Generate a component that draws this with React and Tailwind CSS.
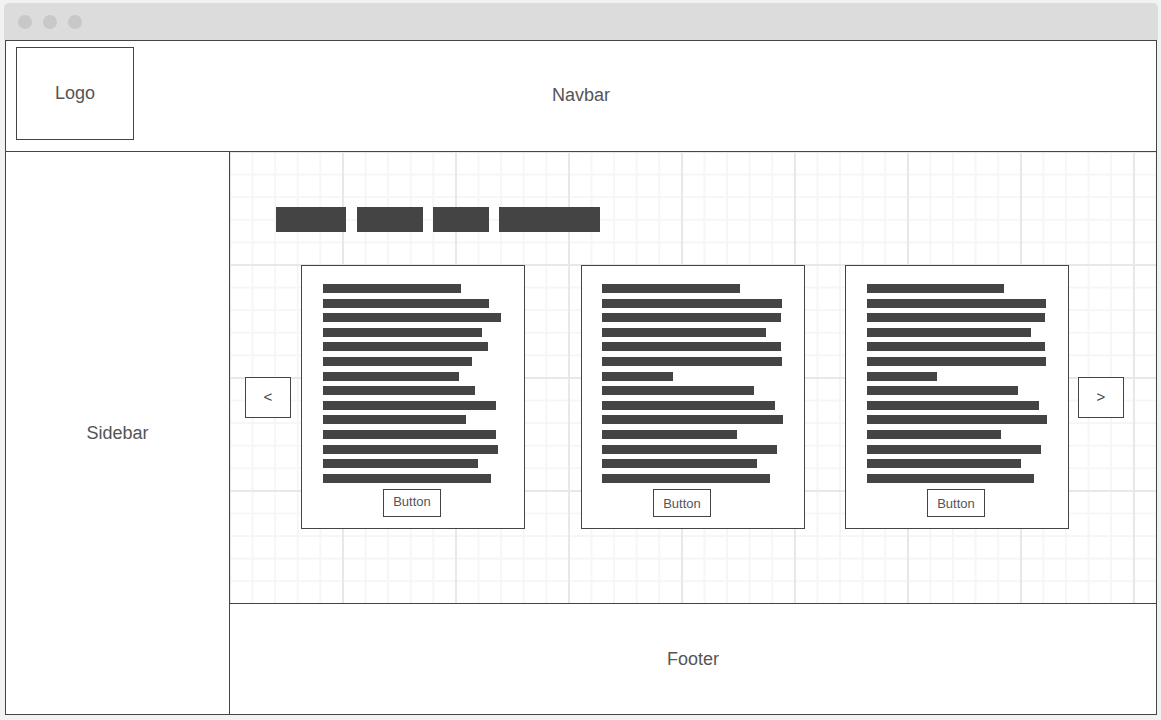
import React from 'react';

const font = { fontFamily: '"Liberation Sans", Arial, sans-serif' };

const cards = [
  {
    pl: 'pl-[21px]',
    btn: 'ml-[60px] pb-[3px]',
    lines: [138, 166, 178, 159, 165, 149, 136, 152, 173, 143, 173, 175, 155, 168],
  },
  {
    pl: 'pl-[20px]',
    btn: 'ml-[51px] pt-[1px]',
    lines: [138, 180, 179, 164, 179, 180, 71, 152, 173, 181, 135, 175, 155, 168],
  },
  {
    pl: 'pl-[21px]',
    btn: 'ml-[60px] pt-[1px]',
    lines: [137, 179, 178, 164, 178, 179, 70, 151, 172, 180, 134, 174, 154, 167],
  },
];

const Card = ({ card, className }) => (
  <div className={`w-[224px] h-[264px] shrink-0 border border-[#444] bg-white pt-[18px] ${card.pl} ${className}`}>
    <div className="flex flex-col gap-[5.6px]">
      {card.lines.map((w, i) => (
        <div key={i} className="h-[9px] bg-[#444]" style={{ width: w }} />
      ))}
    </div>
    <div className={`mt-[6.5px] w-[58px] h-[28px] border border-[#444] flex items-center justify-center text-[13px] text-[#555] ${card.btn}`}>
      Button
    </div>
  </div>
);

const Arrow = ({ children, className }) => (
  <div className={`w-[46px] h-[41px] shrink-0 border border-[#444] bg-white flex items-center justify-center text-[15px] text-[#444] ${className}`}>
    {children}
  </div>
);

export default function App() {
  return (
    <div className="w-[1161px] h-[720px] bg-[#f2f2f2] pt-[3px] pl-[4px] overflow-hidden text-[#444]" style={font}>
      <div className="w-[1154px] h-[37px] bg-[#dcdcdc] rounded-t-[5px] flex items-center gap-[11px] pl-[14px]">
        <span className="w-[14px] h-[14px] rounded-full bg-[#c8c8c8]" />
        <span className="w-[14px] h-[14px] rounded-full bg-[#c8c8c8]" />
        <span className="w-[14px] h-[14px] rounded-full bg-[#c8c8c8]" />
      </div>

      <div className="ml-[1px] w-[1152px] h-[675px] border border-[#444] bg-white flex flex-col">
        {/* navbar */}
        <div className="h-[111px] shrink-0 border-b border-[#444] grid grid-cols-[128px_1fr_128px]">
          <div className="ml-[10px] mt-[6px] w-[118px] h-[93px] border border-[#444] flex items-center justify-center text-[18px] text-[#555]">
            Logo
          </div>
          <div className="flex items-center justify-center text-[18px] text-[#555] pb-[1px]">Navbar</div>
          <div />
        </div>

        <div className="flex flex-1 min-h-0">
          {/* sidebar */}
          <div className="w-[224px] shrink-0 border-r border-[#444] flex items-center justify-center text-[18px] text-[#555]">
            Sidebar
          </div>

          <div className="flex-1 flex flex-col min-w-0">
            {/* content with grid paper */}
            <div className="h-[451px] shrink-0 bg-white bg-[linear-gradient(to_right,#e8e8e8_2px,transparent_2px),linear-gradient(to_bottom,#e8e8e8_2px,transparent_2px),linear-gradient(to_right,#f6f6f6_2px,transparent_2px),linear-gradient(to_bottom,#f6f6f6_2px,transparent_2px)] bg-[size:113px_113px,113px_113px,22.6px_22.6px,22.6px_22.6px] bg-[position:-1px_-1px]">
              <div className="flex pt-[55px] pl-[46px]">
                <div className="w-[70px] h-[25px] bg-[#444]" />
                <div className="ml-[11px] w-[66px] h-[25px] bg-[#444]" />
                <div className="ml-[10px] w-[56px] h-[25px] bg-[#444]" />
                <div className="ml-[10px] w-[101px] h-[25px] bg-[#444]" />
              </div>

              <div className="flex items-center mt-[33px] pl-[15px]">
                <Arrow>&lt;</Arrow>
                <Card card={cards[0]} className="ml-[10px]" />
                <Card card={cards[1]} className="ml-[56px]" />
                <Card card={cards[2]} className="ml-[40px]" />
                <Arrow className="ml-[9px]">&gt;</Arrow>
              </div>
            </div>

            {/* footer */}
            <div className="flex-1 border-t border-[#444] flex items-center justify-center text-[18px] text-[#555]">
              Footer
            </div>
          </div>
        </div>
      </div>
    </div>
  );
}
